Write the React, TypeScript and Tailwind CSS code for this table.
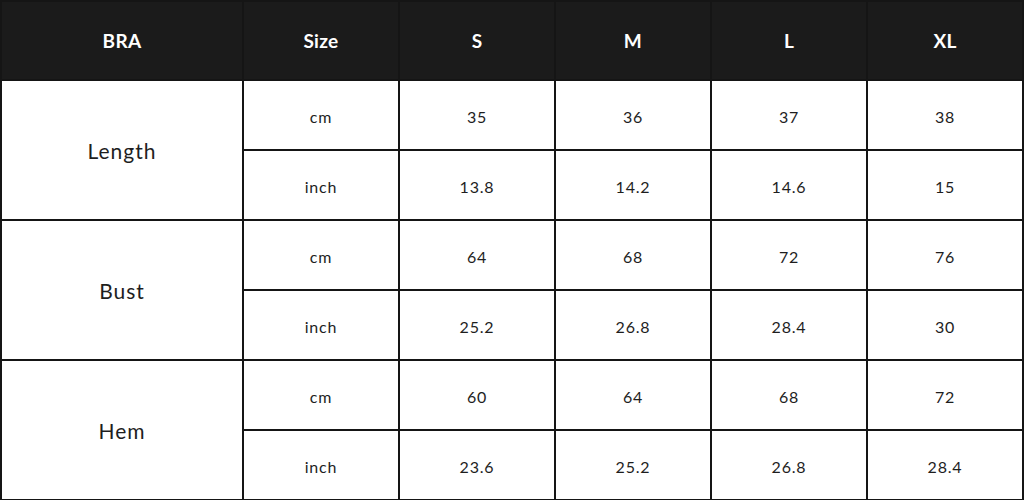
import React from 'react';

const sizes = ['S', 'M', 'L', 'XL'];

const rows = [
  { label: 'Length', cm: ['35', '36', '37', '38'], inch: ['13.8', '14.2', '14.6', '15'] },
  { label: 'Bust', cm: ['64', '68', '72', '76'], inch: ['25.2', '26.8', '28.4', '30'] },
  { label: 'Hem', cm: ['60', '64', '68', '72'], inch: ['23.6', '25.2', '26.8', '28.4'] },
];

const head = 'bg-[#1b1b1b] text-white font-bold text-[19px] tracking-[0.3px] flex items-center justify-center pt-[2px]';
const cell = 'bg-white text-[#1e1e1e] text-[16px] tracking-[0.8px] flex items-center justify-center pt-[3px]';

export default function App() {
  return (
    <div className="w-[1024px] h-[500px] overflow-hidden bg-white font-['Lato','Liberation_Sans',sans-serif]">
      <div className="grid grid-cols-[240px_repeat(5,154px)] grid-rows-[77px_repeat(6,68px)] gap-[2px] p-[2px] bg-[#151515]">
        <div className={head}>BRA</div>
        <div className={head}>Size</div>
        {sizes.map((s) => (
          <div key={s} className={head}>
            {s}
          </div>
        ))}
        {rows.map((r) => (
          <React.Fragment key={r.label}>
            <div className="row-span-2 bg-white text-[#1e1e1e] text-[21px] tracking-[1px] flex items-center justify-center pt-[1px]">
              {r.label}
            </div>
            <div className={cell}>cm</div>
            {r.cm.map((v, i) => (
              <div key={'c' + i} className={cell}>
                {v}
              </div>
            ))}
            <div className={cell}>inch</div>
            {r.inch.map((v, i) => (
              <div key={'i' + i} className={cell}>
                {v}
              </div>
            ))}
          </React.Fragment>
        ))}
      </div>
    </div>
  );
}
